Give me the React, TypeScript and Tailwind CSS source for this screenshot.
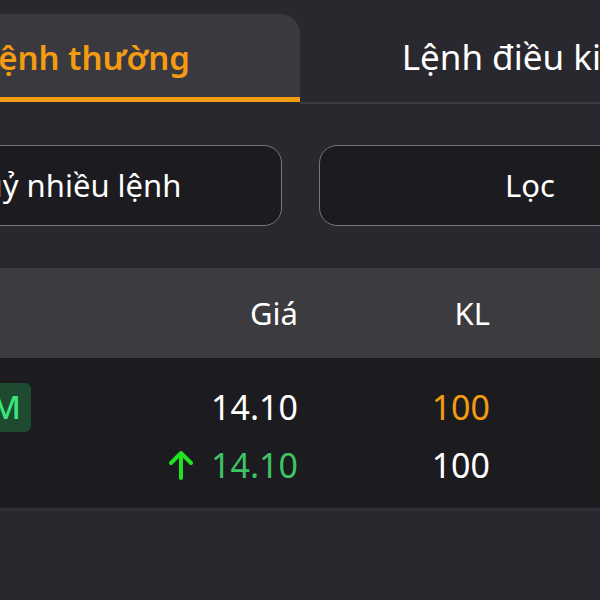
import React from "react";

const UpArrow = () => (
  <svg width="24" height="30" viewBox="0 0 24 30" fill="none">
    <path
      d="M12 28V3M2 13L12 3l10 10"
      stroke="#22e022"
      strokeWidth="4"
      strokeLinecap="round"
      strokeLinejoin="round"
    />
  </svg>
);

const App = () => {
  return (
    <div className="w-[600px] h-[600px] overflow-hidden bg-[#29282e] font-['Noto_Sans',sans-serif] text-white">
      {/* Tabs */}
      <div className="flex items-start pt-[14px] -ml-[130px]">
        <div className="w-[430px] h-[88px] shrink-0 rounded-t-[20px] bg-[#3a393f] border-b-[5px] border-[#f39c12] flex justify-center pt-[20px]">
          <span className="text-[33px] font-semibold text-[#f39c12] leading-[48px]">
            Lệnh thường
          </span>
        </div>
        <div className="w-[430px] h-[90px] shrink-0 border-b-2 border-[#3c3b41] flex justify-center pt-[19px] pl-[14px]">
          <span className="text-[35px] leading-[48px]">Lệnh điều kiện</span>
        </div>
      </div>

      {/* Actions */}
      <div className="flex gap-[37px] mt-[41px] -ml-[140px]">
        <button className="w-[422px] h-[81px] shrink-0 rounded-[18px] border-[1.5px] border-[#77767b] bg-[#1c1b20] text-[31px] text-white">
          Huỷ nhiều lệnh
        </button>
        <button className="w-[422px] h-[81px] shrink-0 rounded-[18px] border-[1.5px] border-[#77767b] bg-[#1c1b20] text-[31px] text-white">
          Lọc
        </button>
      </div>

      {/* Table header */}
      <div className="mt-[42px] h-[90px] bg-[#3c3b40] flex items-center text-[31px]">
        <div className="w-[298px] text-right">Giá</div>
        <div className="w-[192px] text-right">KL</div>
      </div>

      {/* Rows */}
      <div className="bg-[#1c1b20] pt-[20px] pb-[14px] border-b-[3px] border-[#302f35] text-[34px]">
        <div className="h-[58px] flex items-center">
          <div className="w-[298px] flex items-center justify-between">
            <div className="-ml-[19px] w-[50px] h-[49px] rounded-[6px] bg-[#1e4a30] flex items-center justify-center text-[33px] font-medium text-[#38e67c]">
              M
            </div>
            <span>14.10</span>
          </div>
          <div className="w-[192px] text-right text-[#f39c12]">100</div>
        </div>
        <div className="h-[58px] flex items-center">
          <div className="w-[298px] flex items-center justify-end gap-[18px]">
            <UpArrow />
            <span className="text-[#3cc464]">14.10</span>
          </div>
          <div className="w-[192px] text-right">100</div>
        </div>
      </div>
    </div>
  );
};

export default App;
